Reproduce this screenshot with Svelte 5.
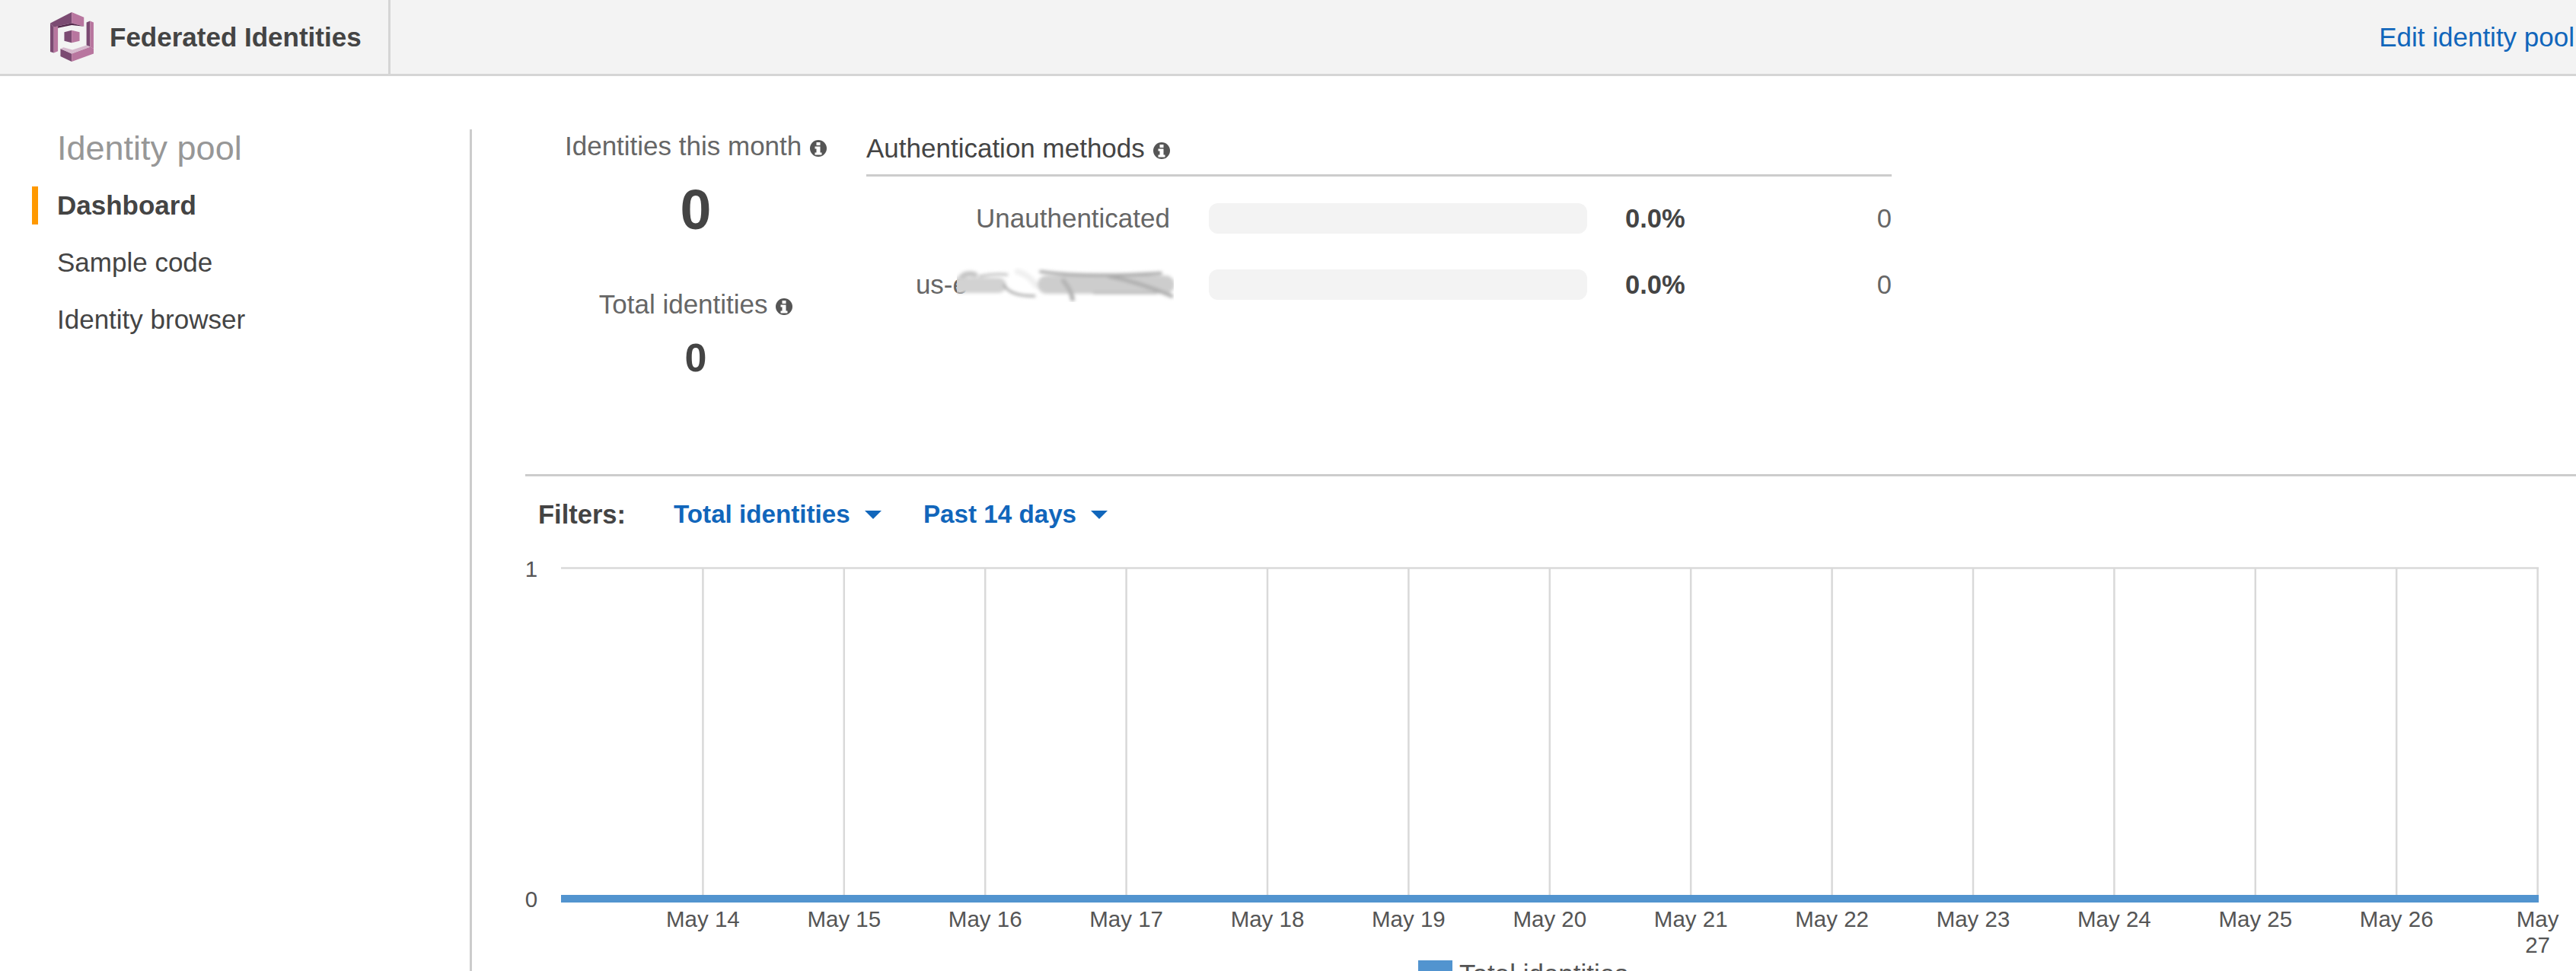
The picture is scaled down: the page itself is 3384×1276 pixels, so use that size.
<script>
  let pageTabs = ['Dashboard', 'Sample code', 'Identity browser'];
  let activeTab = 'Dashboard';

  let authMethods = [
    { label: 'Unauthenticated', percent: '0.0%', count: 0 },
    { label: 'us-e', redacted: true, percent: '0.0%', count: 0 }
  ];

  // chart geometry
  const plotLeft = 737;
  const plotRight = 3335;
  const firstTick = 923.4;
  const tickGap = 185.4;
  const days = [14, 15, 16, 17, 18, 19, 20, 21, 22, 23, 24, 25, 26, 27];
</script>

{#snippet infoIcon()}
  <svg class="info" viewBox="0 0 22 22" aria-hidden="true">
    <circle cx="11" cy="11" r="11" fill="#555" />
    <rect x="8.500" y="3" width="5" height="4" fill="#fff" />
    <path d="M6.500 8.500h7v8h2v3h-9v-3h2v-5h-2z" fill="#fff" />
  </svg>
{/snippet}

<div class="page">
  <header class="topbar">
    <div class="brand">
      <svg class="logo" viewBox="78 42 170 194" aria-hidden="true">
        <polygon points="78,85 162,42 162,85 92,100" fill="#7b4a72" />
        <polygon points="162,42 210,62 210,98 162,85" fill="#b8769f" />
        <polygon points="92,100 162,85 210,98 162,93 108,104" fill="#54294c" />
        <polygon points="78,85 92,100 92,202 78,197" fill="#7b4a72" />
        <polygon points="92,100 108,97 108,195 92,202" fill="#b8769f" />
        <polygon points="220,82 234,76 234,178 220,172" fill="#7b4a72" />
        <polygon points="234,76 248,82 248,185 234,178" fill="#b8769f" />
        <polygon points="118,185 162,205 162,236 118,215" fill="#7b4a72" />
        <polygon points="162,205 235,178 248,185 248,205 162,236" fill="#b8769f" />
        <polygon points="118,185 130,180 165,190 220,172 235,178 162,205" fill="#d6b8cd" />
        <polygon points="133,120 162,113 162,162 133,155" fill="#7b4a72" />
        <polygon points="162,113 193,120 193,155 162,162" fill="#b8769f" />
      </svg>
      <span class="brand-name">Federated Identities</span>
    </div>
    <a class="edit-link" href="#edit">Edit identity pool</a>
  </header>

  <div class="content">
    <aside class="sidebar">
      <div class="sidebar-title">Identity pool</div>
      <nav class="side-nav">
        {#each pageTabs as tab}
          <a href="#tab" class="side-link" class:active={tab === activeTab}>{tab}</a>
        {/each}
      </nav>
    </aside>

    <main class="main">
      <section class="summary">
        <div class="totals">
          <div class="total-label">Identities this month {@render infoIcon()}</div>
          <div class="total-big">0</div>
          <div class="total-label second">Total identities {@render infoIcon()}</div>
          <div class="total-small">0</div>
        </div>

        <div class="methods">
          <div class="methods-head">Authentication methods {@render infoIcon()}</div>
          {#each authMethods as method}
            <div class="method-row">
              <div class="method-label">
                {method.label}{#if method.redacted}
                  <!-- the id is smeared out in the screenshot -->
                  <svg class="smudge" viewBox="0 0 285 46" aria-hidden="true">
                    <defs>
                      <filter id="smear" x="-10%" y="-30%" width="120%" height="160%">
                        <feGaussianBlur stdDeviation="2" />
                      </filter>
                    </defs>
                    <g filter="url(#smear)" fill="none" stroke-linecap="round">
                      <path d="M4 16 Q10 6 24 10" stroke="#c4c4c4" stroke-width="7" />
                      <path d="M0 24 H55" stroke="#d2d2d2" stroke-width="20" />
                      <path d="M30 12 Q50 8 66 10" stroke="#bbb" stroke-width="3" />
                      <path d="M62 24 Q70 38 102 38" stroke="#a4a4a4" stroke-width="3" />
                      <path d="M80 6 Q95 10 104 24" stroke="#f0f0f0" stroke-width="8" />
                      <path d="M118 23 H274" stroke="#cdcdcd" stroke-width="24" />
                      <path d="M110 6 Q170 14 268 8" stroke="#aaa" stroke-width="4" />
                      <path d="M140 18 Q150 30 152 42" stroke="#b4b4b4" stroke-width="6" />
                      <path d="M200 12 Q240 20 282 38" stroke="#aeaeae" stroke-width="5" />
                      <path d="M180 34 H262" stroke="#b8b8b8" stroke-width="3" />
                    </g>
                  </svg>
                {/if}
              </div>
              <div class="method-bar"></div>
              <div class="method-percent">{method.percent}</div>
              <div class="method-count">{method.count}</div>
            </div>
          {/each}
        </div>
      </section>

      <section class="filters">
        <span class="filters-label">Filters:</span>
        <a class="filter" href="#metric">Total identities <span class="caret"></span></a>
        <a class="filter" href="#range">Past 14 days <span class="caret"></span></a>
      </section>

      <section class="chart-wrap">
        <svg class="chart" viewBox="620 730 2764 546" aria-label="Total identities chart">
          <text class="axis" x="698" y="758" text-anchor="middle">1</text>
          <text class="axis" x="698" y="1192" text-anchor="middle">0</text>
          <line class="grid" x1={plotLeft} x2={plotRight} y1="746.5" y2="746.5" />
          {#each days as day, i}
            {@const x = firstTick + i * tickGap}
            <line class="grid" x1={x} x2={x} y1="746" y2="1180" />
            {#if day === 27}
              <text class="axis" x={x} y="1218" text-anchor="middle">May</text>
              <text class="axis" x={x} y="1252" text-anchor="middle">{day}</text>
            {:else}
              <text class="axis" x={x} y="1218" text-anchor="middle">May {day}</text>
            {/if}
          {/each}
          <rect x={plotLeft} y="1176" width={plotRight - plotLeft} height="10" fill="#5294cf" />
          <rect x="1863" y="1262" width="45" height="20" fill="#5294cf" />
          <text class="axis legend" x="1917" y="1292">Total identities</text>
        </svg>
      </section>
    </main>
  </div>
</div>

<style>
  :global(body) {
    margin: 0;
    background: #fff;
  }

  .page {
    width: 3384px;
    height: 1276px;
    overflow: hidden;
    font-family: "Liberation Sans", Arial, sans-serif;
    font-size: 35px;
    color: #444;
  }

  .topbar {
    display: flex;
    align-items: stretch;
    justify-content: space-between;
    height: 100px;
    box-sizing: border-box;
    background: #f3f3f3;
    border-bottom: 3px solid #d5d5d5;
  }

  .brand {
    display: flex;
    align-items: center;
    gap: 21px;
    width: 513px;
    box-sizing: border-box;
    padding-left: 66px;
    border-right: 3px solid #d5d5d5;
  }

  .logo {
    width: 57px;
    height: 65px;
  }

  .brand-name {
    font-weight: 700;
  }

  .edit-link {
    align-self: center;
    margin-right: 2px;
    color: #1166bb;
    text-decoration: none;
  }

  .content {
    display: flex;
    padding-top: 70px;
  }

  .sidebar {
    width: 620px;
    height: 1106px;
    box-sizing: border-box;
    flex: none;
    border-right: 3px solid #ccc;
  }

  .sidebar-title {
    padding-left: 75px;
    font-size: 45px;
    line-height: 50px;
    color: #979797;
  }

  .side-nav {
    display: flex;
    flex-direction: column;
    padding-top: 25px;
  }

  .side-link {
    height: 50px;
    margin-bottom: 25px;
    margin-left: 42px;
    padding-left: 25px;
    border-left: 8px solid transparent;
    line-height: 50px;
    color: #444;
    text-decoration: none;
  }

  .side-link.active {
    border-left-color: #ff9900;
    font-weight: 700;
  }

  .main {
    flex: 1;
    min-width: 0;
    padding-left: 70px;
  }

  .summary {
    display: flex;
    height: 456px;
    box-sizing: border-box;
    border-bottom: 3px solid #ccc;
  }

  .totals {
    width: 448px;
    padding-top: 2px;
    text-align: center;
    flex: none;
  }

  .total-label {
    height: 40px;
    line-height: 40px;
    color: #666;
    white-space: nowrap;
  }

  .total-label.second {
    margin-top: 62px;
  }

  .total-big {
    margin-top: 22px;
    font-size: 73.5px;
    line-height: 84px;
    font-weight: 700;
  }

  .total-small {
    margin-top: 20px;
    font-size: 52px;
    line-height: 60px;
    font-weight: 700;
  }

  .info {
    display: inline-block;
    width: 22px;
    height: 22px;
    margin-left: 1px;
    vertical-align: -2px;
  }

  .methods {
    width: 1347px;
    flex: none;
  }

  .methods-head {
    height: 62px;
    box-sizing: border-box;
    padding-top: 5px;
    line-height: 40px;
    border-bottom: 3px solid #ccc;
    white-space: nowrap;
  }

  .method-row {
    display: flex;
    align-items: center;
    height: 40px;
    margin-top: 35px;
  }

  .method-row + .method-row {
    margin-top: 47px;
  }

  .method-label {
    display: flex;
    align-items: center;
    justify-content: flex-end;
    width: 399px;
    flex: none;
    color: #666;
    white-space: nowrap;
  }

  .smudge {
    flex: none;
    width: 285px;
    height: 46px;
    margin-left: -14px;
    margin-right: -5px;
  }

  .method-bar {
    width: 497px;
    height: 40px;
    margin-left: 51px;
    flex: none;
    border-radius: 12px;
    background: #f3f3f3;
  }

  .method-percent {
    margin-left: 50px;
    font-size: 34.5px;
    font-weight: 700;
  }

  .method-count {
    flex: 1;
    text-align: right;
    font-size: 34.5px;
    color: #666;
  }

  .filters {
    display: flex;
    align-items: center;
    height: 40px;
    margin-top: 30px;
    padding-left: 17px;
    font-size: 33.2px;
    font-weight: 700;
  }

  .filters-label {
    margin-right: 63px;
    font-size: 34.5px;
  }

  .filter {
    display: flex;
    align-items: center;
    margin-right: 55px;
    color: #1166bb;
    text-decoration: none;
    white-space: pre;
  }

  .caret {
    width: 0;
    height: 0;
    margin-left: 10px;
    border-left: 11px solid transparent;
    border-right: 11px solid transparent;
    border-top: 11px solid #1166bb;
  }

  .chart-wrap {
    margin-left: -70px;
    margin-top: 34px;
  }

  .chart {
    display: block;
    width: 2764px;
    height: 546px;
  }

  .grid {
    stroke: #d9d9d9;
    stroke-width: 2.5;
  }

  .axis {
    font-size: 29.5px;
    fill: #555;
  }

  .legend {
    font-size: 35px;
  }
</style>
